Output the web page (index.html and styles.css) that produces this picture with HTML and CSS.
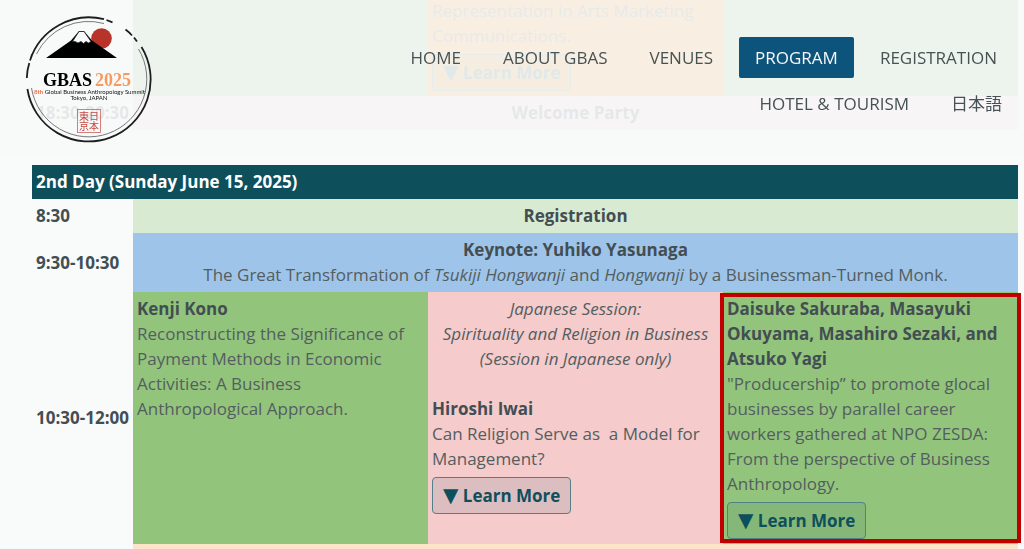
FILE: index.html
```html
<!DOCTYPE html>
<html lang="en">
<head>
<meta charset="utf-8">
<meta name="viewport" content="width=device-width, initial-scale=1">
<title>GBAS 2025 Program</title>
<link rel="stylesheet" href="styles.css">
</head>
<body>
<header class="site-header">
  <a class="logo" href="#" aria-label="GBAS 2025">
    <svg class="logo-art" viewBox="24 14 130 130" width="130" height="130">
      <g fill="none" stroke="#1d1d20">
        <path stroke-width="1.8" d="M30 59.500A62 62 0 0 1 104 18.200M106.500 19L112.500 21.300M125.500 28.500Q129 31 132 34.500M134 36.500L137 40.500M141.500 46A62 62 0 1 1 27.400 88M26.800 77Q27 69 29.300 62M30.500 58L32 53.500"/>
        <path stroke-width=".8" stroke="#55585b" d="M36.500 53A58 58 0 0 1 104 22.500M138.500 48A58 58 0 1 1 31.500 87"/>
      </g>
      <circle cx="101.500" cy="37.500" r="10.300" fill="#b8342a"/>
      <path d="M46 57L71 39.500L79 30H84L92 39.500L117 57Z" fill="#000"/>
      <path d="M72.500 40.500L79 30.500H84L91 40.500L88.500 42L86 40.500L83.500 42.500L81 40.500L78 42L75 40.500Z" fill="#f7f9f9" stroke="#222" stroke-width=".8"/>
      <text class="logo-name" x="43" y="85">GBAS</text>
      <text class="logo-year" x="95" y="85">2025</text>
      <text class="logo-sub" x="89.500" y="92.500" text-anchor="middle"><tspan class="logo-ordinal">8th</tspan> Global Business Anthropology Summit</text>
      <text class="logo-sub" x="89" y="98.500" text-anchor="middle">Tokyo, JAPAN</text>
      <rect x="77.500" y="108.500" width="23" height="23" fill="none" stroke="#c9605b" stroke-width=".8"/>
      <text class="logo-seal" x="79" y="119">東日</text>
      <text class="logo-seal" x="79" y="129">京本</text>
    </svg>
  </a>
  <nav class="nav" aria-label="Main">
    <ul class="nav-list">
      <li><a href="#">HOME</a></li>
      <li><a href="#">ABOUT GBAS</a></li>
      <li><a href="#">VENUES</a></li>
      <li><a class="active" href="#" aria-current="page">PROGRAM</a></li>
      <li><a href="#">REGISTRATION</a></li>
      <li><a href="#">HOTEL &amp; TOURISM</a></li>
      <li><a href="#" lang="ja">日本語</a></li>
    </ul>
  </nav>
</header>

<main class="program">
  <table class="schedule">
    <colgroup><col class="time-col"><col><col><col></colgroup>
    <tbody>
      <tr class="continued">
        <th></th>
        <td class="green"></td>
        <td class="orange">Representation in Arts Marketing Communications.<br><button class="more" type="button"><span class="arrow">▼</span> Learn More</button></td>
        <td class="green"></td>
      </tr>
      <tr>
        <th scope="row">18:30-20:30</th>
        <td class="rose center" colspan="3"><strong>Welcome Party</strong></td>
      </tr>
    </tbody>
  </table>

  <table class="schedule">
    <colgroup><col class="time-col"><col><col><col></colgroup>
    <thead>
      <tr><th class="day" colspan="4">2nd Day (Sunday June 15, 2025)</th></tr>
    </thead>
    <tbody>
      <tr>
        <th scope="row">8:30</th>
        <td class="mint center" colspan="3"><strong>Registration</strong></td>
      </tr>
      <tr>
        <th scope="row">9:30-10:30</th>
        <td class="blue center" colspan="3"><strong>Keynote: Yuhiko Yasunaga</strong><br>The Great Transformation of <em>Tsukiji Hongwanji</em> and <em>Hongwanji</em> by a Businessman-Turned Monk.</td>
      </tr>
      <tr>
        <th scope="row">10:30-12:00</th>
        <td class="green"><strong>Kenji Kono</strong><br>Reconstructing the Significance of Payment Methods in Economic Activities: A Business Anthropological Approach.</td>
        <td class="rose">
          <p class="session">Japanese Session:<br>Spirituality and Religion in Business<br>(Session in Japanese only)</p>
          <strong>Hiroshi Iwai</strong><br>Can Religion Serve as &nbsp;a Model for Management?<br><button class="more" type="button"><span class="arrow">▼</span> Learn More</button>
        </td>
        <td class="green highlight"><strong>Daisuke Sakuraba, Masayuki Okuyama, Masahiro Sezaki, and Atsuko Yagi</strong><br>"Producership” to promote glocal businesses by parallel career workers gathered at NPO ZESDA: From the perspective of Business Anthropology.<br><button class="more" type="button"><span class="arrow">▼</span> Learn More</button></td>
      </tr>
      <tr class="break">
        <th></th>
        <td class="peach" colspan="3"></td>
      </tr>
    </tbody>
  </table>
</main>
</body>
</html>
```
FILE: styles.css
```css
* { box-sizing: border-box; }

body {
  margin: 0;
  background: #f9fbfb;
  color: #535e60;
  font: 17px/25px "Open Sans", "Noto Sans CJK JP", sans-serif;
}

.site-header {
  position: fixed;
  top: 0;
  left: 0;
  right: 0;
  z-index: 10;
  display: flex;
  align-items: flex-start;
  justify-content: space-between;
  padding: 15px 6px 12px 24px;
  background: rgba(247, 249, 249, .9);
}

.logo { flex: none; }
.logo-art { display: block; }
.logo-name, .logo-year { font: bold 18px "Liberation Serif", serif; }
.logo-year { fill: #f79a60; }
.logo-sub { font: 6px Lato, sans-serif; fill: #111; }
.logo-ordinal { fill: #ee7045; font-weight: bold; }
.logo-seal { font: 10px "Noto Sans CJK JP", sans-serif; fill: #c34740; }

.nav { flex: 0 1 640px; padding-top: 22px; }
.nav-list {
  display: flex;
  flex-wrap: wrap;
  justify-content: flex-end;
  row-gap: 5px;
  margin: 0;
  padding: 0;
  list-style: none;
}
.nav-list li { margin: 0 5px; }
.nav-list li:last-child { margin-right: 0; }
.nav-list a {
  display: block;
  padding: 8px 16px;
  border-radius: 2px;
  color: #475255;
  text-decoration: none;
}
.nav-list .active { background: #0d547c; color: #f4f8fa; }

.program {
  display: grid;
  gap: 35px;
  margin-top: -2px;
  padding: 0 6px 0 32px;
}

.schedule {
  width: 100%;
  table-layout: fixed;
  border-collapse: collapse;
}
.time-col { width: 101px; }
.schedule th, .schedule td {
  padding: 4px 4px 5px;
  text-align: left;
}
.schedule td { vertical-align: top; }
.schedule .center { text-align: center; }
.schedule th, .schedule strong { color: #434e53; font-weight: bold; }
.schedule th { white-space: nowrap; }
.schedule .day { background: #0e4f5c; color: #fff; }
.schedule .continued td { padding-top: 0; }
.schedule .break th, .schedule .break td { height: 5px; padding: 0; }

.mint { background: #d9ead3; }
.blue { background: #9fc4e9; }
.green { background: #93c47c; }
.rose { background: #f5cbcc; }
.orange { background: #ff8000; }
.peach { background: #fde3c9; }

.session {
  margin: 0 0 25px;
  font-style: italic;
  text-align: center;
}

.more {
  display: block;
  margin-top: 6px;
  padding: 5px 10px;
  border: 1px solid #527f88;
  border-radius: 4px;
  background: rgba(14, 79, 92, .1);
  color: #0e4f5c;
  font: bold 17px/25px "Open Sans", sans-serif;
}
.arrow { font: 20px/20px "DejaVu Sans", sans-serif; }

.highlight { position: relative; }
.highlight::after {
  content: "";
  position: absolute;
  inset: 1px -3px 1px -3px;
  border: 4px solid #c00000;
}
```
